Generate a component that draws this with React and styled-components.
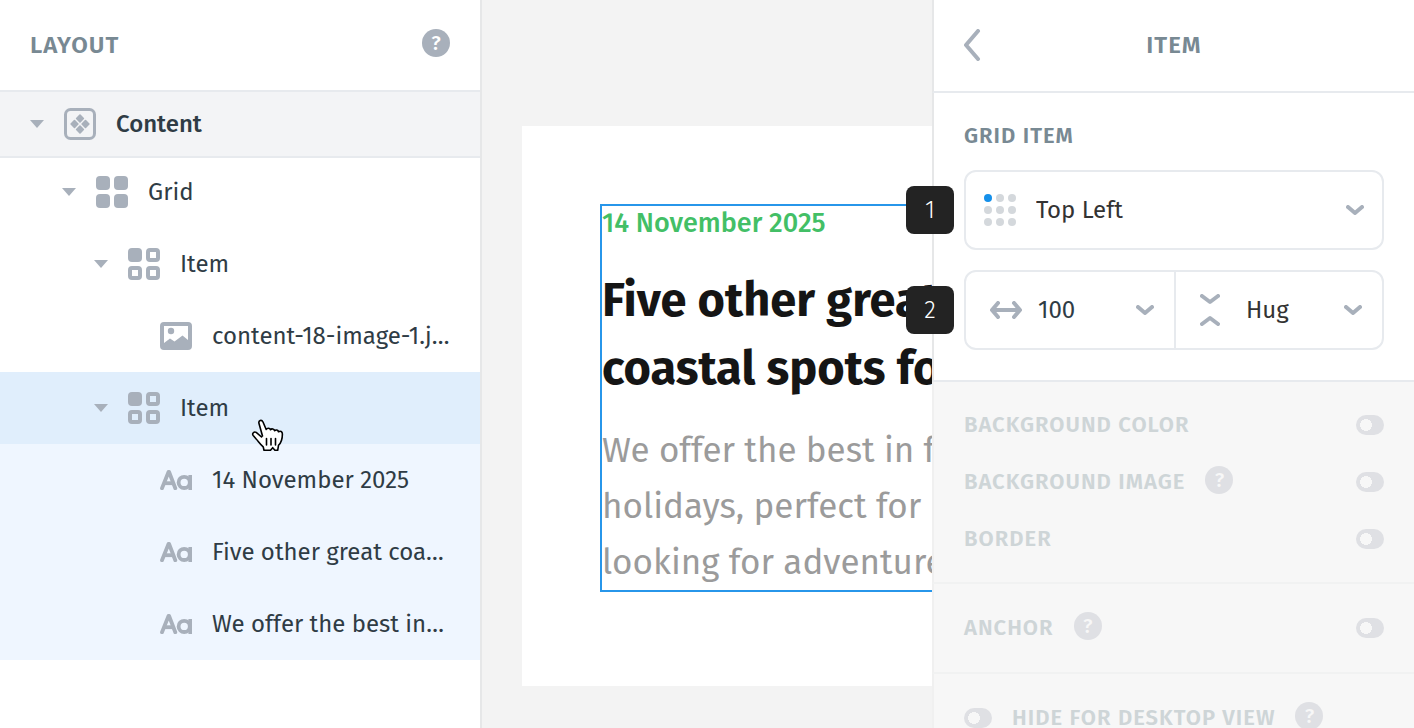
import React from "react";
import styled, { createGlobalStyle, css } from "styled-components";

const Global = createGlobalStyle`
  *, *::before, *::after { box-sizing: border-box; }
  html, body { margin: 0; }
  body, button, input, select {
    font-family: "Fira Sans", "Noto Sans", "Open Sans", sans-serif;
  }
  h1, h2, h3, p, ul { margin: 0; padding: 0; }
`;

const ink = "#2f3c45";
const muted = "#a8b0bb";
const line = "#e7eaee";

const Page = styled.div`
  display: grid;
  grid-template-columns: 482px minmax(0, 1fr) 482px;
  height: 100vh;
  overflow: hidden;
  background: #f3f3f3;
`;

const LayoutPanel = styled.aside`
  border-right: 2px solid #e6e7e8;
  background: #fff;
`;

const PanelHeader = styled.header`
  display: flex;
  align-items: center;
  justify-content: space-between;
  height: 92px;
  padding: 0 30px;
  border-bottom: 2px solid ${line};
`;

const Title = styled.h2`
  color: #788993;
  font-size: 24px;
  font-weight: 600;
  line-height: 28px;
  letter-spacing: 1px;
  white-space: nowrap;
`;

const SectionTitle = styled(Title)`
  font-size: 22px;
`;

const CenteredTitle = styled(Title)`
  flex: 1;
  padding-right: 18px;
  text-align: center;
`;

const HelpButton = styled.button`
  flex: none;
  width: 28px;
  height: 28px;
  margin: 0 0 4px;
  padding: 0;
  border: 0;
  border-radius: 50%;
  background: ${muted};
  color: #fff;
  font-size: 20px;
  font-weight: 500;
  line-height: 28px;
  text-align: center;
`;

const Tree = styled.ul`
  list-style: none;
`;

const TreeRow = styled.li`
  position: relative;
  display: flex;
  align-items: center;
  gap: 20px;
  height: 72px;
  padding-left: ${(p) => 30 + p.$depth * 32}px;
  color: ${ink};
  font-size: 24px;
  line-height: 32px;
  white-space: nowrap;
  ${(p) => p.$tone === "child" && css`background: #eff6ff;`}
  ${(p) => p.$tone === "selected" && css`background: #e0eefc;`}
  ${(p) =>
    p.$tone === "root" &&
    css`
      height: 64px;
      background: #f3f4f6;
      box-shadow: 0 2px 0 ${line};
      font-weight: 500;
    `}
`;

const CaretButton = styled.button`
  display: flex;
  width: 14px;
  padding: 0;
  border: 0;
  background: none;
`;

const CaretSpace = styled.span`
  width: 14px;
`;

const PointerMark = styled.span`
  position: absolute;
  top: 47px;
  left: 251px;
  z-index: 1;
  line-height: 0;
`;

const Canvas = styled.main`
  min-width: 0;
  padding: 126px 0 42px 40px;
  overflow: hidden;
`;

const Paper = styled.div`
  height: 560px;
  padding: 78px 0 0 78px;
  background: #fff;
`;

const Selection = styled.article`
  width: 700px;
  border: 2px solid #2796ea;
  white-space: nowrap;
`;

const PostDate = styled.p`
  color: #43bf66;
  font-size: 27px;
  font-weight: 500;
  line-height: 34px;
`;

const PostTitle = styled.h1`
  margin: 26px 0 20px;
  color: #151515;
  font-size: 47px;
  font-weight: 700;
  line-height: 68px;
`;

const PostText = styled.p`
  color: #9b9b9b;
  font-size: 35px;
  line-height: 56px;
`;

const ItemPanel = styled.aside`
  position: relative;
  z-index: 1;
  background: #fff;
`;

const ItemHeader = styled(PanelHeader)`
  height: 93px;
  padding-bottom: 2px;
  border-left: 2px solid #e6e7e8;
`;

const BackButton = styled.button`
  display: flex;
  padding: 0;
  border: 0;
  background: none;
`;

const GridSection = styled.section`
  display: flex;
  flex-direction: column;
  gap: 20px;
  padding: 29px 30px 30px;
  border-left: 2px solid #e6e7e8;
  border-bottom: 2px solid ${line};
`;

const Field = styled.div`
  position: relative;
  display: grid;
  grid-auto-flow: column;
  grid-auto-columns: minmax(0, 1fr);
  height: 80px;
  border: 2px solid ${line};
  border-radius: 12px;
`;

const FieldPart = styled.label`
  display: flex;
  align-items: center;
  gap: ${(p) => p.$gap || 20}px;
  min-width: 0;
  padding: 0 ${(p) => p.$right || 18}px 0 ${(p) => p.$left || 18}px;

  & + & {
    border-left: 2px solid ${line};
  }

  svg {
    flex: none;
  }
`;

const control = css`
  flex: 1;
  min-width: 0;
  width: 0;
  height: 40px;
  margin: 0;
  padding: 0;
  border: 0;
  outline: 0;
  appearance: none;
  background: none;
  font-size: 24px;
`;

const Select = styled.select`
  ${control}
  color: #333;
`;

const TextInput = styled.input`
  ${control}
  color: ${ink};
`;

const Badge = styled.span`
  position: absolute;
  top: 14px;
  left: -60px;
  width: 48px;
  height: 48px;
  border-radius: 8px;
  background: #232323;
  color: #fff;
  font-size: 24px;
  font-weight: 300;
  line-height: 48px;
  text-align: center;
`;

const OptionGroup = styled.section`
  padding: ${(p) => (p.$stacked ? "14px 30px 15px" : "0 30px")};
  border-left: 2px solid #f0f0f0;
  border-bottom: 2px solid #f1f2f2;
  background: #f7f7f7;
`;

const OptionRow = styled.div`
  display: flex;
  align-items: center;
  gap: 20px;
  height: ${(p) => (p.$tall ? 88 : 57)}px;

  ${HelpButton} {
    background: #dfe0e4;
    color: #f7f7f7;
  }
`;

const OptionLabel = styled.label`
  color: #ced5d7;
  font-size: 22px;
  font-weight: 600;
  line-height: 28px;
  letter-spacing: 1px;
  white-space: nowrap;
`;

const Switch = styled.input`
  flex: none;
  width: 28px;
  height: 20px;
  margin: 0 0 0 ${(p) => (p.$end ? "auto" : "0")};
  border-radius: 10px;
  appearance: none;
  background: radial-gradient(circle at 10px 10px, #f7f7f7 6px, #dfe0e4 6px);
`;

const Caret = () => (
  <svg width="14" height="8" viewBox="0 0 14 8" fill={muted}>
    <path d="M0 0h14L7 8z" />
  </svg>
);

const Chevron = () => (
  <svg width="18" height="10" viewBox="0 0 18 10" fill="none" stroke={muted} strokeWidth="4" strokeLinecap="round" strokeLinejoin="round">
    <path d="M2 2l7 6 7-6" />
  </svg>
);

const ContentIcon = () => (
  <svg width="32" height="32" viewBox="0 0 32 32" fill={muted}>
    <rect x="1.5" y="1.5" width="29" height="29" rx="5" fill="none" stroke={muted} strokeWidth="3" />
    {[[16, 10.5], [10.5, 16], [21.5, 16], [16, 21.5]].map(([x, y]) => (
      <rect key={`${x}-${y}`} x={x - 3.2} y={y - 3.2} width="6.4" height="6.4" rx="0.8" transform={`rotate(45 ${x} ${y})`} />
    ))}
  </svg>
);

const GridIcon = () => (
  <svg width="32" height="32" viewBox="0 0 32 32" fill={muted}>
    <rect width="14" height="14" rx="4" />
    <rect x="18" width="14" height="14" rx="4" />
    <rect y="18" width="14" height="14" rx="4" />
    <rect x="18" y="18" width="14" height="14" rx="4" />
  </svg>
);

const ItemIcon = () => (
  <svg width="32" height="32" viewBox="0 0 32 32" fill="none" stroke={muted} strokeWidth="4">
    <rect width="14" height="14" rx="4" fill={muted} stroke="none" />
    <rect x="20" y="2" width="10" height="10" rx="2" />
    <rect x="2" y="20" width="10" height="10" rx="2" />
    <rect x="20" y="20" width="10" height="10" rx="2" />
  </svg>
);

const ImageIcon = () => (
  <svg width="32" height="28" viewBox="0 0 32 28" fill={muted}>
    <path fillRule="evenodd" d="M4 0h24a4 4 0 0 1 4 4v20a4 4 0 0 1-4 4H4a4 4 0 0 1-4-4V4a4 4 0 0 1 4-4zM4 4v17l6-4.500 4.500 3L22.500 13.500l5.500 4.500V4z" />
    <circle cx="11" cy="9" r="3.200" />
  </svg>
);

const TypeIcon = () => (
  <svg width="32" height="20" viewBox="0 0 32 20" fill="none" stroke={muted} strokeWidth="3.800">
    <path d="M2 18.200L8.500 2h.6L15.300 18.200" strokeLinecap="round" strokeLinejoin="round" />
    <path d="M4.500 13.200h9" />
    <circle cx="24.200" cy="12.400" r="5.600" />
    <path d="M30.200 5V20" strokeWidth="3.600" />
  </svg>
);

const BackIcon = () => (
  <svg width="18" height="32" viewBox="0 0 18 32" fill="none" stroke={muted} strokeWidth="4" strokeLinecap="round" strokeLinejoin="round">
    <path d="M14 2L2 16l12 14" />
  </svg>
);

const DotsIcon = () => (
  <svg width="32" height="32" viewBox="0 0 32 32" fill="#d4d8dc">
    {[4, 16, 28].map((y) =>
      [4, 16, 28].map((x) => (
        <circle key={`${x}-${y}`} cx={x} cy={y} r="4" fill={x + y === 8 ? "#1590ea" : undefined} />
      ))
    )}
  </svg>
);

const WidthIcon = () => (
  <svg width="32" height="18" viewBox="0 0 32 18" fill="none" stroke={muted} strokeWidth="4" strokeLinecap="round" strokeLinejoin="round">
    <path d="M8 2L2 9l6 7M24 2l6 7-6 7M3 9h26" />
  </svg>
);

const HugIcon = () => (
  <svg width="20" height="32" viewBox="0 0 20 32" fill="none" stroke={muted} strokeWidth="4" strokeLinecap="round" strokeLinejoin="round">
    <path d="M2 2l8 6 8-6M2 30l8-6 8 6" />
  </svg>
);

const HandIcon = () => (
  <svg width="33" height="34" viewBox="0 0 33 34" fill="#fff" stroke="#000" strokeWidth="1.600" strokeLinejoin="round" strokeLinecap="round">
    <path d="M11.500 17L8 4.500C7.200 1.400 10.600 .200 12 3l3.200 7.500c.900-1.700 3.700-1.700 4.300.300.900-1.500 3.700-1.100 4.100.900 1.200-1.300 3.500-.700 3.900 1.100 1.900-1.200 3.900-.200 3.900 2.100 0 4.500-.200 7.800-3.900 11.400l-.800 5h-2.800l-2.200-2.600-2.200 2.600h-6.500l-.8-3.500C9 25 7.500 22.500 5.200 20L2.200 16.500c-1.500-2 .800-4.300 3-3.100l5.300 4.600" />
    <path d="M15.500 19.500v6.500M20 19.500v6.500M24.500 19.500v6.500" fill="none" />
  </svg>
);

const Help = () => <HelpButton aria-label="Help">?</HelpButton>;

const rows = [
  { label: "Content", depth: 0, Icon: ContentIcon, tone: "root", open: true },
  { label: "Grid", depth: 1, Icon: GridIcon, open: true },
  { label: "Item", depth: 2, Icon: ItemIcon, open: true },
  { label: "content-18-image-1.j…", depth: 3, Icon: ImageIcon },
  { label: "Item", depth: 2, Icon: ItemIcon, tone: "selected", open: true, pointer: true },
  { label: "14 November 2025", depth: 3, Icon: TypeIcon, tone: "child" },
  { label: "Five other great coa…", depth: 3, Icon: TypeIcon, tone: "child" },
  { label: "We offer the best in…", depth: 3, Icon: TypeIcon, tone: "child" },
];

function LayoutTree() {
  return (
    <Tree>
      {rows.map(({ label, depth, Icon, tone, open, pointer }, i) => (
        <TreeRow key={i} $depth={depth} $tone={tone}>
          {open ? (
            <CaretButton aria-label={`Collapse ${label}`}>
              <Caret />
            </CaretButton>
          ) : (
            <CaretSpace />
          )}
          <Icon />
          <span>{label}</span>
          {pointer && (
            <PointerMark>
              <HandIcon />
            </PointerMark>
          )}
        </TreeRow>
      ))}
    </Tree>
  );
}

function Option({ id, label, help, tall }) {
  return (
    <OptionRow $tall={tall}>
      <OptionLabel htmlFor={id}>{label}</OptionLabel>
      {help && <Help />}
      <Switch type="checkbox" id={id} $end />
    </OptionRow>
  );
}

export default function App() {
  return (
    <>
      <Global />
      <Page>
        <LayoutPanel>
          <PanelHeader>
            <Title>LAYOUT</Title>
            <Help />
          </PanelHeader>
          <LayoutTree />
        </LayoutPanel>

        <Canvas>
          <Paper>
            <Selection>
              <PostDate>14 November 2025</PostDate>
              <PostTitle>
                Five other great
                <br />
                coastal spots for
              </PostTitle>
              <PostText>
                We offer the best in f
                <br />
                holidays, perfect for
                <br />
                looking for adventure
              </PostText>
            </Selection>
          </Paper>
        </Canvas>

        <ItemPanel>
          <ItemHeader>
            <BackButton aria-label="Back">
              <BackIcon />
            </BackButton>
            <CenteredTitle>ITEM</CenteredTitle>
          </ItemHeader>
          <GridSection>
            <SectionTitle as="h3">GRID ITEM</SectionTitle>
            <Field>
              <FieldPart>
                <DotsIcon />
                <Select aria-label="Alignment" defaultValue="Top Left">
                  <option>Top Left</option>
                </Select>
                <Chevron />
              </FieldPart>
              <Badge>1</Badge>
            </Field>
            <Field>
              <FieldPart $left={24} $right={20} $gap={16}>
                <WidthIcon />
                <TextInput aria-label="Width" defaultValue="100" />
                <Chevron />
              </FieldPart>
              <FieldPart $left={24} $right={20} $gap={26}>
                <HugIcon />
                <Select aria-label="Height" defaultValue="Hug">
                  <option>Hug</option>
                </Select>
                <Chevron />
              </FieldPart>
              <Badge>2</Badge>
            </Field>
          </GridSection>
          <OptionGroup $stacked>
            <Option id="bg-color" label="BACKGROUND COLOR" />
            <Option id="bg-image" label="BACKGROUND IMAGE" help />
            <Option id="border" label="BORDER" />
          </OptionGroup>
          <OptionGroup>
            <Option id="anchor" label="ANCHOR" help tall />
          </OptionGroup>
          <OptionGroup>
            <OptionRow $tall>
              <Switch type="checkbox" id="hide-desktop" />
              <OptionLabel htmlFor="hide-desktop">HIDE FOR DESKTOP VIEW</OptionLabel>
              <Help />
            </OptionRow>
          </OptionGroup>
        </ItemPanel>
      </Page>
    </>
  );
}
